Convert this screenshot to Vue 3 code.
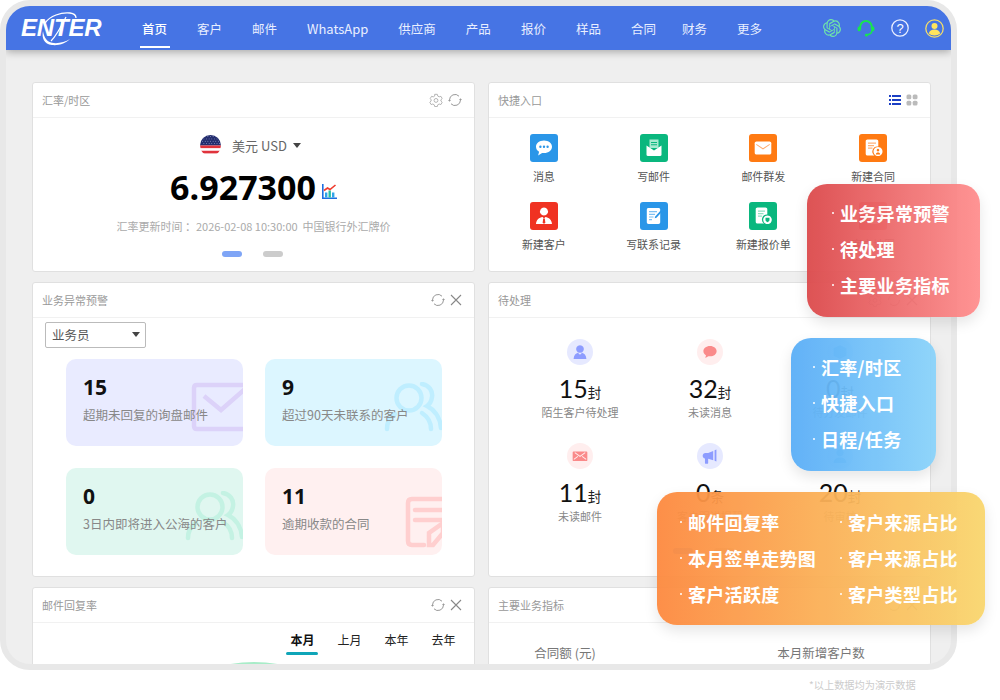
<script setup>
const navItems = ['首页', '客户', '邮件', 'WhatsApp', '供应商', '产品', '报价', '样品', '合同', '财务', '更多']

const quickItems = [
  { label: '消息', tone: 'q-blue', shapes: [
    ['M14 6.5c-4.6 0-8 2.8-8 6.3 0 2.1 1.2 3.9 3.1 5l-1 3.7 4-2.5c.6.1 1.2.1 1.9.1 4.6 0 8-2.8 8-6.3s-3.4-6.3-8-6.3z', '#fff'],
    ['M9.2 12.8a1.2 1.2 0 1 0 2.4 0 1.2 1.2 0 1 0-2.4 0zM12.8 12.8a1.2 1.2 0 1 0 2.4 0 1.2 1.2 0 1 0-2.4 0zM16.4 12.8a1.2 1.2 0 1 0 2.4 0 1.2 1.2 0 1 0-2.4 0z', '#2a96e8']
  ] },
  { label: '写邮件', tone: 'q-green', shapes: [
    ['M9.5 5.5h9v8.5h-9z', '#a8ead0'],
    ['M11 8h6v1h-6zM11 10.300h6v1h-6z', '#0ab77e'],
    ['M6.500 11.500v9.300c0 .7.5 1.200 1.200 1.200h12.600c.7 0 1.200-.5 1.200-1.200v-9.300L14 16.500z', '#fff']
  ] },
  { label: '邮件群发', tone: 'q-orange', shapes: [
    ['M7.500 7.500h13c1 0 1.800.8 1.800 1.800v9.400c0 1-.8 1.800-1.800 1.800h-13c-1 0-1.800-.8-1.800-1.800V9.300c0-1 .8-1.800 1.800-1.800z', '#fff'],
    ['M7.500 10l6.500 4.300L20.500 10l.4.8-6.900 4.700-6.900-4.700z', '#ffa868']
  ] },
  { label: '新建合同', tone: 'q-orange', shapes: [
    ['M8.500 5.500h9c1 0 1.800.8 1.800 1.800v5.200a5 5 0 0 0-3.800 9H8.500c-1 0-1.800-.8-1.800-1.800V7.300c0-1 .8-1.800 1.800-1.800z', '#fff'],
    ['M9 8.500h8v1.200H9zM9 11h6v1.200H9zM9 13.500h4.500v1.200H9z', '#ffb27a'],
    ['M19 13a4.500 4.500 0 1 1-.01 0z', '#fff'],
    ['M19 14.800a1.300 1.300 0 1 1-.01 0zM16.800 20.400c.2-1.400 1-2 2.200-2s2 .6 2.200 2z', '#ff7a12']
  ] },
  { label: '新建客户', tone: 'q-red', shapes: [
    ['M14 5.500a4 4 0 1 1-.01 0zM6 22c.3-4.200 3.200-6.500 6.600-7l1.400 1.500 1.400-1.500c3.400.5 6.300 2.800 6.600 7z', '#fff'],
    ['M13.200 16.500h1.600l.5 4-1.300 1.400-1.300-1.400z', '#f03222']
  ] },
  { label: '写联系记录', tone: 'q-blue', shapes: [
    ['M8.500 6h10c1 0 1.700.7 1.700 1.700v12.600c0 1-.7 1.700-1.700 1.700h-10c-1 0-1.700-.7-1.700-1.700V7.700C6.800 6.700 7.500 6 8.500 6z', '#fff'],
    ['M9 9h8v1.200H9zM9 11.700h6v1.200H9zM9 14.400h4.500v1.200H9zM9 17.100h3v1.200H9z', '#7dc0f2'],
    ['M21.500 7.500l1.300 1.300-6.300 7-1.800.5.500-1.800z', '#2a96e8']
  ] },
  { label: '新建报价单', tone: 'q-green', shapes: [
    ['M8.500 5.500h8c1 0 1.800.8 1.800 1.800v5.200a5 5 0 0 0-3.300 9H8.500c-1 0-1.800-.8-1.800-1.800V7.300c0-1 .8-1.800 1.800-1.800z', '#fff'],
    ['M9 8.500h7v1.200H9zM9 11h5.500v1.200H9zM9 13.500h4v1.200H9z', '#8fe0c2'],
    ['M18.500 13.500a4.300 4.300 0 1 1-.01 0z', '#fff'],
    ['M16.500 15.800h4v2.200c0 1-1 1.700-2 2.200-1-.5-2-1.200-2-2.200z', '#0ab77e']
  ] },
  { label: '客户地图', tone: 'q-coral', shapes: [
    ['M8.500 6h11v16h-11z', '#fff']
  ] }
]

const alerts = [
  { num: 15, label: '超期未回复的询盘邮件', tone: 's-violet', icon: 'mail' },
  { num: 9, label: '超过90天未联系的客户', tone: 's-sky', icon: 'people' },
  { num: 0, label: '3日内即将进入公海的客户', tone: 's-mint', icon: 'people' },
  { num: 11, label: '逾期收款的合同', tone: 's-rose', icon: 'doc' }
]

const todos = [
  { num: 15, unit: '封', label: '陌生客户待处理', tone: 't-violet', d: 'M12 4.500a4.200 4.200 0 1 1-.01 0zM5 19.500c.2-4.200 2.600-6.300 4.700-6.800L12 15l2.300-2.300c2.100.5 4.500 2.600 4.700 6.800z' },
  { num: 32, unit: '封', label: '未读消息', tone: 't-rose', d: 'M12 5.500c-4.200 0-7.200 2.500-7.200 5.600 0 1.900 1.100 3.500 2.800 4.500l-.7 3 3.300-2c.6.100 1.200.1 1.800.1 4.200 0 7.200-2.500 7.200-5.600S16.200 5.500 12 5.500z' },
  { num: 0, unit: '封', label: '待分发邮件', tone: 't-sky', d: 'M12 4.500l7 3.500v8l-7 3.500L5 16V8z' },
  { num: 11, unit: '封', label: '未读邮件', tone: 't-rose', d: 'M5 7h14c.6 0 1 .4 1 1v8.500c0 .6-.4 1-1 1H5c-.6 0-1-.4-1-1V8c0-.6.4-1 1-1zm1 1.800l6 4.200 6-4.200-.6-.8-5.400 3.800L6.600 8zM5.500 16l4.500-3.300-.6-.7-4.400 3.300zm13 0l.5-.7-4.400-3.300-.6.7z' },
  { num: 0, unit: '条', label: '客户跟进提醒', tone: 't-violet', d: 'M19 5v13l-2-.7V5.700zM15.500 6.500v10.200L10 15v4.500c0 .6-.5 1-1 1H7.500c-.6 0-1-.4-1-1V14.800C5 14.500 4 13.300 4 11.800 4 10 5.400 8.700 7 8.700h3z' },
  { num: 20, unit: '封', label: '待审核', tone: 't-sky', d: 'M12 4.500a4 4 0 1 1-.01 0zM5 19.500c.3-4 3-6 7-6s6.700 2 7 6z' }
]

const tabs = ['本月', '上月', '本年', '去年']
const redList = ['业务异常预警', '待处理', '主要业务指标']
const blueList = ['汇率/时区', '快捷入口', '日程/任务']
const orangeList = ['邮件回复率', '客户来源占比', '本月签单走势图', '客户来源占比', '客户活跃度', '客户类型占比']

const flagStars = []
for (let row = 0; row < 4; row++) {
  for (let col = 0; col < 7; col++) {
    flagStars.push({ x: 2.5 + col * 2.5 + (row % 2) * 1.2, y: 1.500 + row * 2.200 })
  }
}
</script>

<template>
  <div class="stage">
    <div class="frame">
      <header class="topbar">
        <div class="logo">
          <span>ENTER</span>
          <svg class="logo-ring" viewBox="0 0 44 36" width="44" height="36">
            <path d="M8 12C13 5 24 1 33 2c4 .5 6 2.500 6 5" fill="none" stroke="#fff" stroke-width="1.300" />
            <path d="M6 20c-1.500 7 1 13 9 14 7 .8 14-2 18-6-5 3-12 5-18 3.800-5-1-8-5-9-11.800z" fill="#fff" />
            <path d="M29 6C25 14 20 24 14 30" fill="none" stroke="#fff" stroke-width="1.200" />
          </svg>
        </div>
        <nav class="nav">
          <a v-for="(item, i) in navItems" :key="item" :class="['nav-item', { on: i === 0, wide: item === 'WhatsApp' }]">{{ item }}</a>
        </nav>
        <div class="tools">
          <svg viewBox="0 0 24 24" width="18" height="18" fill="#6fe3aa">
            <path d="M22.2819 9.8211a5.9847 5.9847 0 0 0-.5157-4.9108 6.0462 6.0462 0 0 0-6.5098-2.9A6.0651 6.0651 0 0 0 4.9807 4.1818a5.9847 5.9847 0 0 0-3.9977 2.9 6.0462 6.0462 0 0 0 .7427 7.0966 5.98 5.98 0 0 0 .511 4.9107 6.051 6.051 0 0 0 6.5146 2.9001A5.9847 5.9847 0 0 0 13.2599 24a6.0557 6.0557 0 0 0 5.7718-4.2058 5.9894 5.9894 0 0 0 3.9977-2.9001 6.0557 6.0557 0 0 0-.7475-7.0729zm-9.022 12.6081a4.4755 4.4755 0 0 1-2.8764-1.0408l.1419-.0804 4.7783-2.7582a.7948.7948 0 0 0 .3927-.6813v-6.7369l2.02 1.1686a.071.071 0 0 1 .038.052v5.5826a4.504 4.504 0 0 1-4.4945 4.4944zm-9.6607-4.1254a4.4708 4.4708 0 0 1-.5346-3.0137l.142.0852 4.783 2.7582a.7712.7712 0 0 0 .7806 0l5.8428-3.3685v2.3324a.0804.0804 0 0 1-.0332.0615L9.74 19.9502a4.4992 4.4992 0 0 1-6.1408-1.6464zM2.3408 7.8956a4.485 4.485 0 0 1 2.3655-1.9728V11.6a.7664.7664 0 0 0 .3879.6765l5.8144 3.3543-2.0201 1.1685a.0757.0757 0 0 1-.071 0l-4.8303-2.7865A4.504 4.504 0 0 1 2.3408 7.872zm16.5963 3.8558L13.1038 8.364 15.1192 7.2a.0757.0757 0 0 1 .071 0l4.8303 2.7913a4.4944 4.4944 0 0 1-.6765 8.1042v-5.6772a.79.79 0 0 0-.407-.667zm2.0107-3.0231l-.142-.0852-4.7735-2.7818a.7759.7759 0 0 0-.7854 0L9.409 9.2297V6.8974a.0662.0662 0 0 1 .0284-.0615l4.8303-2.7866a4.4992 4.4992 0 0 1 6.6802 4.66zM8.3065 12.863l-2.02-1.1638a.0804.0804 0 0 1-.038-.0567V6.0742a4.4992 4.4992 0 0 1 7.3757-3.4537l-.142.0805L8.704 5.459a.7948.7948 0 0 0-.3927.6813zm1.0976-2.3654l2.602-1.4998 2.6069 1.4998v2.9994l-2.5974 1.4997-2.6067-1.4997Z" />
          </svg>
          <svg viewBox="0 0 18 18" width="18" height="18" fill="none" stroke="#17e64f" stroke-width="2">
            <path d="M3.200 10V7.800a5.800 5.800 0 0 1 11.600 0V10" />
            <path d="M15 11c0 2.600-1.800 4.300-4.500 4.700" stroke-width="1.500" />
            <rect x="0.600" y="7.500" width="3.200" height="4.800" rx="1.500" fill="#17e64f" stroke="none" />
            <rect x="14.200" y="7.500" width="3.200" height="4.800" rx="1.500" fill="#17e64f" stroke="none" />
            <circle cx="9.500" cy="16" r="1.600" fill="#17e64f" stroke="none" />
          </svg>
          <svg viewBox="0 0 18 18" width="18" height="18">
            <circle cx="9" cy="9" r="8.200" fill="none" stroke="#e8eeff" stroke-width="1.300" />
            <text x="9" y="13.500" text-anchor="middle" class="help-mark">?</text>
          </svg>
          <svg viewBox="0 0 19 19" width="19" height="19">
            <circle cx="9.500" cy="9.500" r="8.700" fill="#4674e4" stroke="#f2dc6a" stroke-width="1.300" />
            <circle cx="9.500" cy="7" r="3" fill="#ffe45c" />
            <path d="M3.800 14.500c.5-2.800 2.800-4 5.700-4s5.200 1.200 5.700 4c-1.500 1.300-3.500 2-5.700 2s-4.200-.7-5.700-2z" fill="#ffe45c" />
          </svg>
        </div>
      </header>

      <main class="board">
        <section class="card">
          <div class="card-head">
            <span>汇率/时区</span>
            <div class="head-icons">
              <svg viewBox="0 0 16 16" width="14" height="14" fill="none" stroke="#aaa" stroke-width="1">
                <path d="M6.500 1.500h3l.5 2 1.600.9 2-.6 1.500 2.600-1.500 1.400v1.400l1.500 1.400-1.500 2.600-2-.6-1.600.9-.5 2h-3l-.5-2-1.600-.9-2 .6-1.500-2.600 1.500-1.400V7.800L1.400 6.400l1.500-2.600 2 .6 1.600-.9z" />
                <circle cx="8" cy="8.500" r="2.200" />
              </svg>
              <svg viewBox="0 0 14 14" width="14" height="14" fill="none" stroke="#999" stroke-width="1">
                <path d="M1.500 7A5.500 5.500 0 0 1 11 3.200M12.500 7A5.500 5.500 0 0 1 3 10.800" />
                <path d="M11 7l1.500-1.800L14 7zM0 7l1.500 1.800L3 7z" fill="#999" stroke="none" />
              </svg>
            </div>
          </div>
          <div class="rate">
            <div class="currency">
              <svg viewBox="0 0 20 20" width="21" height="21">
                <clipPath id="flag-round"><circle cx="10" cy="10" r="10" /></clipPath>
                <g clip-path="url(#flag-round)">
                  <rect width="20" height="20" fill="#fff" />
                  <rect y="0" width="20" height="10" fill="#232d6e" />
                  <rect y="10" width="20" height="2.500" fill="#e0333c" />
                  <rect y="15" width="20" height="2.500" fill="#e0333c" />
                  <circle v-for="(s, i) in flagStars" :key="i" :cx="s.x" :cy="s.y" r=".45" fill="#aab2dc" />
                </g>
              </svg>
              <span class="cur-name">美元 USD</span>
              <i class="caret"></i>
            </div>
            <div class="rate-line">
              <b>6.927300</b>
              <svg viewBox="0 0 15 15" width="15" height="15">
                <path d="M.8 0v14.200H15" fill="none" stroke="#1c6fe0" stroke-width="1.600" />
                <path d="M3 8.500h2.400v5H3z" fill="#2fa4e8" />
                <path d="M6.500 6.500h2.400v7H6.500z" fill="#26c0a0" />
                <path d="M10 8.500h2.400v5H10z" fill="#2fa4e8" />
                <path d="M2 6.500l3.500-2.500 2.500 1.500L13.500 1" fill="none" stroke="#ef3b2d" stroke-width="1.600" />
              </svg>
            </div>
            <p class="rate-note">汇率更新时间 ：2026-02-08 10:30:00 &nbsp;中国银行外汇牌价</p>
            <div class="pager"><i class="active"></i><i></i></div>
          </div>
        </section>

        <section class="card">
          <div class="card-head">
            <span>快捷入口</span>
            <div class="head-icons">
              <svg viewBox="0 0 12 12" width="12" height="12" fill="#1c3fc4">
                <path d="M0 1h2v2H0zM3 1h9v2H3zM0 5h2v2H0zM3 5h9v2H3zM0 9h2v2H0zM3 9h9v2H3z" />
              </svg>
              <svg viewBox="0 0 12 12" width="12" height="12" fill="#bbb">
                <rect x="0.500" y="0.500" width="4.800" height="4.800" rx="1.500" />
                <rect x="6.700" y="0.500" width="4.800" height="4.800" rx="1.500" />
                <rect x="0.500" y="6.700" width="4.800" height="4.800" rx="1.500" />
                <rect x="6.700" y="6.700" width="4.800" height="4.800" rx="1.500" />
              </svg>
            </div>
          </div>
          <div class="quick">
            <div v-for="item in quickItems" :key="item.label" class="quick-item">
              <div :class="['quick-icon', item.tone]">
                <svg viewBox="0 0 28 28" width="28" height="28">
                  <path v-for="s in item.shapes" :key="s[0]" :d="s[0]" :fill="s[1]" />
                </svg>
              </div>
              <span>{{ item.label }}</span>
            </div>
          </div>
        </section>

        <section class="card">
          <div class="card-head">
            <span>业务异常预警</span>
            <div class="head-icons">
              <svg viewBox="0 0 14 14" width="14" height="14" fill="none" stroke="#999" stroke-width="1">
                <path d="M1.500 7A5.500 5.500 0 0 1 11 3.200M12.500 7A5.500 5.500 0 0 1 3 10.800" />
                <path d="M11 7l1.500-1.800L14 7zM0 7l1.500 1.800L3 7z" fill="#999" stroke="none" />
              </svg>
              <svg viewBox="0 0 12 12" width="12" height="12" fill="none" stroke="#888" stroke-width="1.100">
                <path d="M1 1l10 10M11 1L1 11" />
              </svg>
            </div>
          </div>
          <div class="picker">
            <span>业务员</span>
            <i class="caret"></i>
          </div>
          <div class="alerts">
            <div v-for="a in alerts" :key="a.label" :class="['alert', a.tone]">
              <svg v-if="a.icon === 'mail'" class="alert-mark" viewBox="0 0 60 50" width="60" height="50" fill="none" stroke-width="4.500">
                <path d="M57 3H6C4 3 3 4 3 6v38c0 2 1 3 3 3h51" />
                <path d="M13 14l17 14 24-21" />
              </svg>
              <svg v-else-if="a.icon === 'people'" class="alert-mark" viewBox="0 0 60 50" width="60" height="50" fill="none" stroke-width="4.500" stroke-linecap="round">
                <circle cx="25" cy="16" r="12.500" />
                <path d="M3 47c0-6 3-12 8-15M47 47c0-6-3-12-9-16" />
                <path d="M38 2c7 1 11 7 10 13-.5 4-2 7-5 9 6 3 13 10 14 22" />
              </svg>
              <svg v-else class="alert-mark" viewBox="0 0 40 52" width="40" height="52" fill="none" stroke-width="4.500" stroke-linecap="round">
                <path d="M40 3H7C4.500 3 3 4.500 3 7v38c0 2.500 1.500 4 4 4h12" />
                <path d="M10 14h30M10 24h30" />
                <path d="M24 49V37l14-10v10L28 49z" />
              </svg>
              <b>{{ a.num }}</b>
              <span>{{ a.label }}</span>
            </div>
          </div>
        </section>

        <section class="card">
          <div class="card-head">
            <span>待处理</span>
            <div class="head-icons">
              <svg viewBox="0 0 16 16" width="14" height="14" fill="none" stroke="#aaa" stroke-width="1">
                <path d="M6.500 1.500h3l.5 2 1.600.9 2-.6 1.500 2.600-1.500 1.400v1.400l1.500 1.400-1.500 2.600-2-.6-1.600.9-.5 2h-3l-.5-2-1.600-.9-2 .6-1.500-2.600 1.500-1.400V7.800L1.400 6.400l1.500-2.600 2 .6 1.600-.9z" />
                <circle cx="8" cy="8.500" r="2.200" />
              </svg>
              <svg viewBox="0 0 14 14" width="14" height="14" fill="none" stroke="#999" stroke-width="1">
                <path d="M1.500 7A5.500 5.500 0 0 1 11 3.200M12.500 7A5.500 5.500 0 0 1 3 10.800" />
              </svg>
              <svg viewBox="0 0 12 12" width="12" height="12" fill="none" stroke="#888" stroke-width="1.100">
                <path d="M1 1l10 10M11 1L1 11" />
              </svg>
            </div>
          </div>
          <div class="todos">
            <div v-for="t in todos" :key="t.label" class="todo">
              <div :class="['todo-icon', t.tone]">
                <svg viewBox="0 0 24 24" width="22" height="22"><path :d="t.d" fill-rule="evenodd" /></svg>
              </div>
              <div class="todo-num">{{ t.num }}<small>{{ t.unit }}</small></div>
              <span>{{ t.label }}</span>
            </div>
          </div>
          <div class="pager todo-pager"><i class="plain"></i><i></i></div>
        </section>

        <section class="card">
          <div class="card-head">
            <span>邮件回复率</span>
            <div class="head-icons">
              <svg viewBox="0 0 14 14" width="14" height="14" fill="none" stroke="#999" stroke-width="1">
                <path d="M1.500 7A5.500 5.500 0 0 1 11 3.200M12.500 7A5.500 5.500 0 0 1 3 10.800" />
                <path d="M11 7l1.500-1.800L14 7zM0 7l1.500 1.800L3 7z" fill="#999" stroke="none" />
              </svg>
              <svg viewBox="0 0 12 12" width="12" height="12" fill="none" stroke="#888" stroke-width="1.100">
                <path d="M1 1l10 10M11 1L1 11" />
              </svg>
            </div>
          </div>
          <div class="tabs">
            <a v-for="(tab, i) in tabs" :key="tab" :class="['tab', { on: i === 0 }]">{{ tab }}</a>
          </div>
          <div class="donut"></div>
        </section>

        <section class="card">
          <div class="card-head">
            <span>主要业务指标</span>
            <div class="head-icons">
              <svg viewBox="0 0 14 14" width="14" height="14" fill="none" stroke="#999" stroke-width="1">
                <path d="M1.500 7A5.500 5.500 0 0 1 11 3.200M12.500 7A5.500 5.500 0 0 1 3 10.800" />
              </svg>
              <svg viewBox="0 0 12 12" width="12" height="12" fill="none" stroke="#888" stroke-width="1.100">
                <path d="M1 1l10 10M11 1L1 11" />
              </svg>
            </div>
          </div>
          <div class="metrics">
            <span>合同额 (元)</span>
            <span>本月新增客户数</span>
          </div>
        </section>
      </main>
    </div>

    <ul class="float float-red">
      <li v-for="x in redList" :key="x"><i></i>{{ x }}</li>
    </ul>
    <ul class="float float-blue">
      <li v-for="x in blueList" :key="x"><i></i>{{ x }}</li>
    </ul>
    <ul class="float float-orange">
      <li v-for="(x, i) in orangeList" :key="i"><i></i>{{ x }}</li>
    </ul>

    <p class="footnote">*以上数据均为演示数据</p>
  </div>
</template>

<style>
html, body {
  margin: 0;
  background: #fff;
}
</style>

<style scoped>
.stage {
  position: relative;
  width: 1000px;
  height: 700px;
  overflow: hidden;
  font-family: "Noto Sans CJK SC", "Noto Sans", sans-serif;
}
.frame {
  box-sizing: border-box;
  width: 957px;
  height: 670px;
  border: 6px solid #e8e8e8;
  border-radius: 30px;
  overflow: hidden;
  background: #efefef;
}
.topbar {
  position: relative;
  display: flex;
  align-items: center;
  height: 44px;
  padding: 0 7px 0 15px;
  background: #4674e4;
  box-shadow: 0 2px 8px rgba(0, 0, 0, .3);
}
.logo {
  position: relative;
  width: 81px;
  margin-right: 40px;
  font: italic bold 24px/44px "Liberation Sans", sans-serif;
  color: #fff;
  letter-spacing: -.2px;
}
.logo-ring {
  position: absolute;
  left: 16px;
  top: 5px;
}
.nav {
  display: flex;
  gap: 30px;
  height: 100%;
}
.nav-item {
  position: relative;
  font-size: 12.5px;
  line-height: 46px;
  color: #e9efff;
}
.nav-item.wide {
  font-size: 13px;
}
.nav-item:nth-child(10) {
  margin-left: -4px;
}
.nav-item.on {
  color: #fff;
  font-weight: 500;
}
.nav-item.on::after {
  content: "";
  position: absolute;
  left: -2px;
  right: -3px;
  top: 40px;
  height: 2px;
  background: #fff;
}
.tools {
  display: flex;
  align-items: center;
  gap: 16px;
  margin-left: auto;
}
.help-mark {
  font: 13px "Liberation Sans", sans-serif;
  fill: #fff;
}
.board {
  display: grid;
  grid-template-columns: 443px 443px;
  grid-template-rows: 190px 295px 200px;
  gap: 10px 13px;
  padding: 32px 0 0 26px;
}
.card {
  box-sizing: border-box;
  border: 1px solid #e0e0e0;
  border-radius: 3px;
  background: #fff;
}
.card-head {
  box-sizing: border-box;
  display: flex;
  align-items: center;
  justify-content: space-between;
  height: 35px;
  padding: 0 12px 0 9px;
  border-bottom: 1px solid #f1f1f1;
  font-size: 11px;
  color: #999;
}
.head-icons {
  display: flex;
  align-items: center;
  gap: 5px;
}
.rate {
  display: flex;
  flex-direction: column;
  align-items: center;
  padding-top: 17px;
}
.currency {
  display: flex;
  align-items: center;
  height: 20px;
  margin-right: 6px;
}
.cur-name {
  margin: 0 6px 0 11px;
  font-size: 13px;
  color: #666;
}
.caret {
  width: 0;
  height: 0;
  border: 4px solid transparent;
  border-top: 5px solid #444;
  border-bottom: 0;
}
.rate-line {
  display: flex;
  align-items: flex-end;
  gap: 6px;
  height: 40px;
  margin-top: 12px;
}
.rate-line b {
  font: 700 34px/40px "Open Sans", sans-serif;
  color: #000;
}
.rate-line svg {
  margin-bottom: 8px;
}
.rate-note {
  margin: 10px 0 0;
  font-size: 11px;
  line-height: 18px;
  color: #aaa;
}
.pager {
  display: flex;
  gap: 21px;
  margin-top: 16px;
}
.rate .pager {
  margin-right: 2px;
}
.pager i {
  width: 20px;
  height: 6px;
  border-radius: 3px;
  background: #ccc;
}
.pager i.active {
  background: #7fa5f6;
}
.pager i.plain {
  background: #7fa5f6;
}
.quick {
  display: grid;
  grid-template-columns: repeat(4, 1fr);
  row-gap: 18px;
  padding: 16px 2px 0 0;
}
.quick-item {
  display: flex;
  flex-direction: column;
  align-items: center;
  font-size: 11px;
  line-height: 16px;
  color: #555;
}
.quick-item span {
  margin-top: 6px;
}
.quick-icon {
  width: 28px;
  height: 28px;
  border-radius: 3px;
}
.quick-icon svg {
  display: block;
}
.q-blue { background: #2a96e8; }
.q-green { background: #0ab77e; }
.q-orange { background: #ff7a12; }
.q-red { background: #f03222; }
.q-coral { background: #f04b4b; }
.picker {
  box-sizing: border-box;
  display: flex;
  align-items: center;
  justify-content: space-between;
  width: 101px;
  height: 26px;
  margin: 4px 0 0 12px;
  padding: 0 5px 2px 6px;
  border: 1px solid #bbb;
  border-radius: 2px;
  font-size: 12.5px;
  color: #555;
}
.alerts {
  display: grid;
  grid-template-columns: 177px 177px;
  grid-auto-rows: 87px;
  gap: 22px 22px;
  margin: 11px 0 0 33px;
}
.alert {
  position: relative;
  overflow: hidden;
  display: flex;
  flex-direction: column;
  padding: 13px 17px 0;
  border-radius: 10px;
}
.alert b {
  position: relative;
  font: 700 21px/30px "Open Sans", sans-serif;
  color: #111;
}
.alert span {
  position: relative;
  margin-top: 4px;
  font-size: 12.500px;
  line-height: 18px;
  white-space: nowrap;
  color: #888;
}
.alert-mark {
  position: absolute;
  left: 125px;
  top: 23px;
}
.s-violet { background: #e9ebff; }
.s-violet .alert-mark { stroke: #dcd2f9; }
.s-sky { background: #dcf6ff; }
.s-sky .alert-mark { stroke: #bfeeff; left: 119px; }
.s-mint { background: #e0f7f0; }
.s-mint .alert-mark { stroke: #c4f2e3; left: 119px; }
.s-rose { background: #fff0f0; }
.s-rose .alert-mark { stroke: #ffcfcf; left: 140px; top: 28px; }
.todos {
  display: grid;
  grid-template-columns: repeat(3, 130px);
  row-gap: 22px;
  padding: 21px 0 0 26px;
}
.todo {
  display: flex;
  flex-direction: column;
  align-items: center;
}
.todo > span {
  font-size: 11px;
  line-height: 18px;
  color: #888;
}
.todo-icon {
  display: flex;
  align-items: center;
  justify-content: center;
  width: 26px;
  height: 26px;
  border-radius: 50%;
}
.t-violet { background: #e6e9ff; fill: #8d9cff; }
.t-rose { background: #ffeeee; fill: #fa8a8a; }
.t-sky { background: #dff1ff; fill: #5aaef7; }
.todo-num {
  margin-top: 8px;
  font: 400 25px/30px Lato, sans-serif;
  color: #111;
}
.todo-num small {
  font: 13.500px "Noto Sans CJK SC", sans-serif;
  color: #222;
}
.todo-pager {
  margin: 23px 0 0 184px;
}
.tabs {
  display: flex;
  justify-content: flex-end;
  padding: 9px 7px 0 0;
}
.tab {
  position: relative;
  width: 47px;
  padding-bottom: 7px;
  font-size: 12px;
  line-height: 16px;
  text-align: center;
  color: #222;
}
.tab.on {
  font-weight: 700;
  color: #111;
}
.tab.on::after {
  content: "";
  position: absolute;
  left: 7px;
  right: 8px;
  bottom: 0;
  height: 3px;
  border-radius: 2px;
  background: #0fa5b8;
}
.donut {
  width: 276px;
  height: 276px;
  margin: 7px auto 0;
  border-radius: 50%;
  background: #a8ecc8;
}
.metrics {
  display: grid;
  grid-template-columns: 152px 360px;
  padding-top: 21px;
  font-size: 12.5px;
  line-height: 18px;
  text-align: center;
  color: #777;
}
.float {
  position: absolute;
  box-sizing: border-box;
  height: 133px;
  margin: 0;
  padding: 11px 0 0;
  list-style: none;
  border-radius: 20px;
  opacity: .95;
  box-shadow: 0 6px 14px rgba(0, 0, 0, .1);
}
.float li {
  display: flex;
  align-items: center;
  height: 36px;
  font-size: 18px;
  font-weight: 700;
  letter-spacing: .3px;
  white-space: nowrap;
  color: #fff;
}
.float i {
  width: 2px;
  height: 2px;
  margin: 0 6px 0 25px;
  border-radius: 50%;
  background: #fff;
}
.float-red {
  left: 807px;
  top: 184px;
  width: 173px;
  background: linear-gradient(90deg, #dc4a4c, #ff8f8f);
}
.float-blue {
  left: 791px;
  top: 338px;
  width: 145px;
  background: linear-gradient(90deg, #5aaef7, #8ad3fa);
}
.float-blue i {
  margin-left: 22px;
}
.float-orange {
  left: 657px;
  top: 492px;
  width: 328px;
  padding-top: 12px;
  display: grid;
  grid-template-columns: 160px 1fr;
  grid-auto-rows: 36px;
  background: linear-gradient(90deg, #fd8a40, #f9d66e);
}
.float-orange i {
  margin-left: 23px;
}
.footnote {
  position: absolute;
  left: 809px;
  top: 677px;
  margin: 0;
  font-size: 10.2px;
  line-height: 16px;
  color: #ccc;
}
</style>
